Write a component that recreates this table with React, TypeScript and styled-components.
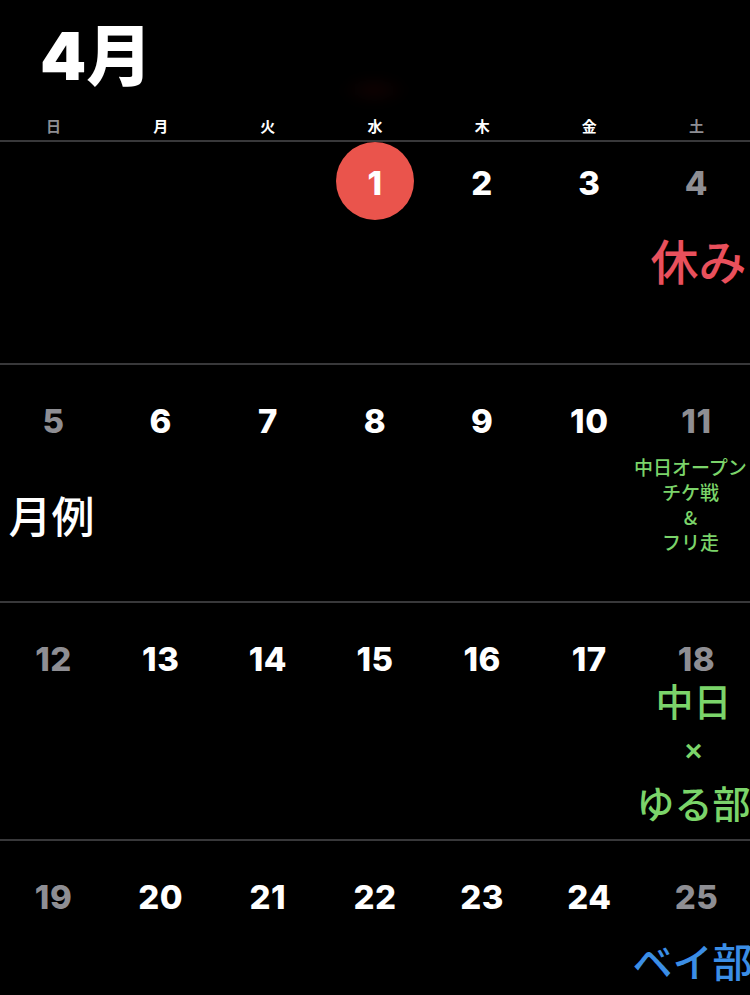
import React from "react";
import styled, { createGlobalStyle, css } from "styled-components";

const Global = createGlobalStyle`
  html, body {
    margin: 0;
    padding: 0;
    background: #000;
    width: 750px;
    height: 995px;
    overflow: hidden;
  }
  body {
    font-family: Inter, "Noto Sans CJK JP", sans-serif;
    color: #fff;
  }
`;

const Page = styled.div`
  position: relative;
  width: 750px;
  height: 995px;
  overflow: hidden;
  background: #000;
`;

const Header = styled.header`
  display: flex;
  flex-direction: column;
  padding-top: 22px;
`;

const Title = styled.h1`
  margin: 0 0 0 40px;
  height: 68px;
  line-height: 68px;
  font-family: Inter, "Noto Sans CJK JP", sans-serif;
  font-weight: 900;
  font-size: 66px;
  letter-spacing: 0px;
  color: #fff;
`;

const Ghost = styled.div`
  position: absolute;
  left: 340px;
  top: 74px;
  width: 68px;
  height: 32px;
  border-radius: 16px;
  background: radial-gradient(ellipse at center, rgba(70, 6, 6, 0.22), rgba(40, 0, 0, 0) 70%);
  filter: blur(5px);
  pointer-events: none;
`;

const WeekRow = styled.div`
  display: grid;
  grid-template-columns: repeat(7, 1fr);
  margin-top: 26px;
  padding-bottom: 4px;
  border-bottom: 2px solid #38383a;
`;

const WeekLabel = styled.div<{ $muted?: boolean }>`
  text-align: center;
  height: 20px;
  line-height: 20px;
  font-family: "Noto Sans CJK JP", sans-serif;
  font-weight: 700;
  font-size: 15px;
  color: ${(p) => (p.$muted ? "#8e8e93" : "#fff")};
`;

const Week = styled.div<{ $first?: boolean }>`
  display: grid;
  grid-template-columns: repeat(7, 1fr);
  height: ${(p) => (p.$first ? 221 : 236)}px;
  border-bottom: 2px solid #38383a;
`;

const Cell = styled.div<{ $first?: boolean }>`
  display: flex;
  flex-direction: column;
  align-items: center;
  min-width: 0;
  padding-top: ${(p) => (p.$first ? 18 : 33)}px;
`;

const DayNum = styled.div<{ $muted?: boolean; $today?: boolean }>`
  position: relative;
  isolation: isolate;
  height: 46px;
  line-height: 46px;
  font-family: Inter, "Liberation Sans", sans-serif;
  font-weight: 800;
  font-size: 33px;
  letter-spacing: 0.5px;
  color: ${(p) => (p.$muted ? "#8e8e93" : "#fff")};
  ${(p) =>
    p.$today &&
    css`
      &::before {
        content: "";
        position: absolute;
        z-index: -1;
        left: 50%;
        top: 50%;
        width: 78px;
        height: 78px;
        margin: -41px 0 0 -39px;
        border-radius: 50%;
        background: #ea544c;
      }
    `}
`;

const Event = styled.div<{
  $color: string;
  $size: number;
  $lh: number;
  $mt: number;
  $dx: number;
  $gap: number;
}>`
  margin-top: ${(p) => p.$mt}px;
  transform: translateX(${(p) => p.$dx}px);
  display: flex;
  flex-direction: column;
  align-items: center;
  gap: ${(p) => p.$gap}px;
  white-space: nowrap;
  font-family: "Noto Sans CJK JP", sans-serif;
  font-weight: 500;
  font-size: ${(p) => p.$size}px;
  line-height: ${(p) => p.$lh}px;
  color: ${(p) => p.$color};
`;

const Cross = styled.span`
  font-family: "Liberation Sans", sans-serif;
  font-weight: 700;
  font-size: 30px;
`;

type Ev = { lines: string[]; color: string; size: number; lh: number; mt: number; dx: number; gap?: number };
type Day = { n: number; today?: boolean; ev?: Ev } | null;

const GREEN = "#7bd46a";

const weeks: Day[][] = [
  [
    null,
    null,
    null,
    { n: 1, today: true },
    { n: 2 },
    { n: 3 },
    { n: 4, ev: { lines: ["休み"], color: "#e9505c", size: 48, lh: 55, mt: 26, dx: 2 } },
  ],
  [
    { n: 5, ev: { lines: ["月例"], color: "#fff", size: 43, lh: 50, mt: 45, dx: -2 } },
    { n: 6 },
    { n: 7 },
    { n: 8 },
    { n: 9 },
    { n: 10 },
    {
      n: 11,
      ev: { lines: ["中日オープン", "チケ戦", "&", "フリ走"], color: GREEN, size: 19, lh: 25, mt: 10, dx: -6 },
    },
  ],
  [
    { n: 12 },
    { n: 13 },
    { n: 14 },
    { n: 15 },
    { n: 16 },
    { n: 17 },
    { n: 18, ev: { lines: ["中日", "×", "ゆる部"], color: GREEN, size: 38, lh: 36, mt: 0, dx: -3, gap: 15 } },
  ],
  [
    { n: 19 },
    { n: 20 },
    { n: 21 },
    { n: 22 },
    { n: 23 },
    { n: 24 },
    { n: 25, ev: { lines: ["ベイ部"], color: "#3b8ee6", size: 40, lh: 48, mt: 16, dx: -4 } },
  ],
];

const labels = ["日", "月", "火", "水", "木", "金", "土"];

export default function App() {
  return (
    <Page>
      <Global />
      <Ghost />
      <Header>
        <Title>4月</Title>
        <WeekRow>
          {labels.map((l, i) => (
            <WeekLabel key={l} $muted={i === 0 || i === 6}>
              {l}
            </WeekLabel>
          ))}
        </WeekRow>
      </Header>
      {weeks.map((w, wi) => (
        <Week key={wi} $first={wi === 0}>
          {w.map((d, di) => (
            <Cell key={di} $first={wi === 0}>
              {d && (
                <>
                  <DayNum $muted={di === 0 || di === 6} $today={d.today}>
                    {d.n}
                  </DayNum>
                  {d.ev && (
                    <Event
                      $color={d.ev.color}
                      $size={d.ev.size}
                      $lh={d.ev.lh}
                      $mt={d.ev.mt}
                      $dx={d.ev.dx}
                      $gap={d.ev.gap ?? 0}
                    >
                      {d.ev.lines.map((line, li) =>
                        line === "×" ? <Cross key={li}>{line}</Cross> : <span key={li}>{line}</span>
                      )}
                    </Event>
                  )}
                </>
              )}
            </Cell>
          ))}
        </Week>
      ))}
    </Page>
  );
}
